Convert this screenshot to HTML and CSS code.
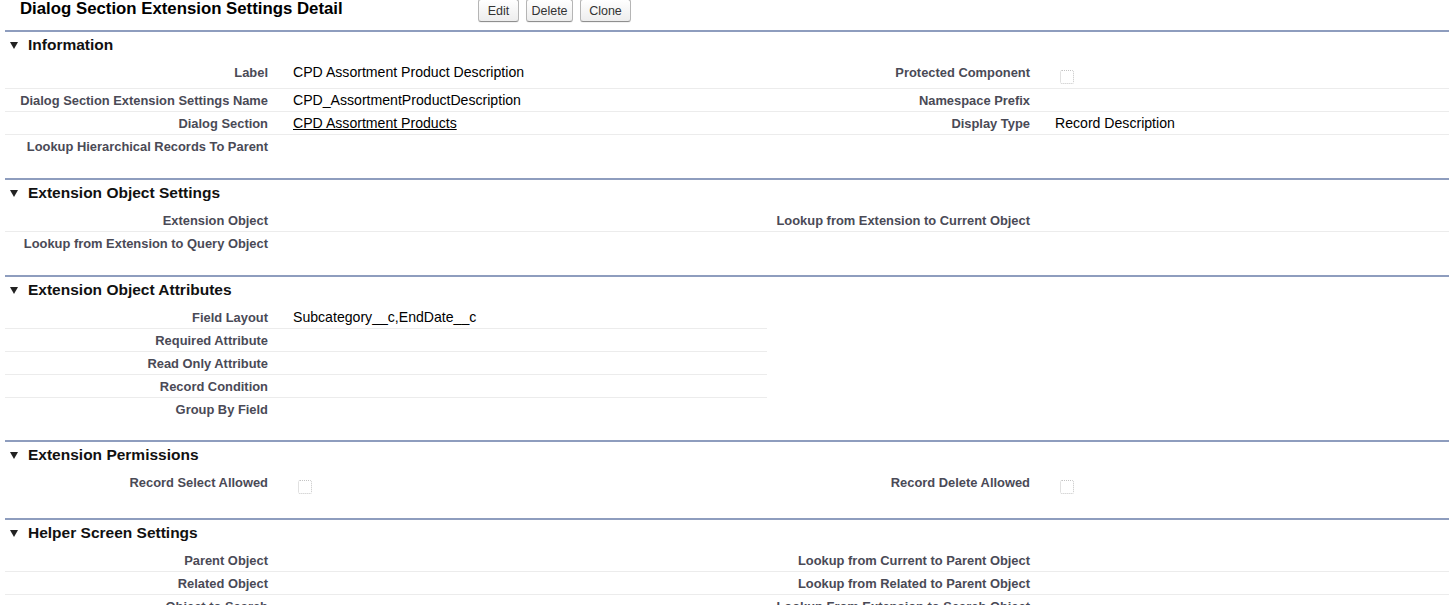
FILE: index.html
```html
<!DOCTYPE html>
<html>
<head>
<meta charset="utf-8">
<link rel="stylesheet" href="styles.css">
</head>
<body>
<div class="page">
  <div class="header">
    <h2 class="title">Dialog Section Extension Settings Detail</h2>
    <div class="buttons">
      <button class="btn btn-edit">Edit</button>
      <button class="btn btn-delete">Delete</button>
      <button class="btn btn-clone">Clone</button>
    </div>
  </div>

  <section class="section section-wide">
    <h3 class="sec-head"><span class="tri"></span>Information</h3>
    <div class="grid">
      <div class="row">
        <div class="lbl">Label</div><div class="val">CPD Assortment Product Description</div>
        <div class="lbl">Protected Component</div><div class="val"><span class="cb"></span></div>
      </div>
      <div class="row">
        <div class="lbl">Dialog Section Extension Settings Name</div><div class="val">CPD_AssortmentProductDescription</div>
        <div class="lbl">Namespace Prefix</div><div class="val"></div>
      </div>
      <div class="row">
        <div class="lbl">Dialog Section</div><div class="val"><a class="link" href="#">CPD Assortment Products</a></div>
        <div class="lbl">Display Type</div><div class="val">Record Description</div>
      </div>
      <div class="row last">
        <div class="lbl">Lookup Hierarchical Records To Parent</div><div class="val"></div>
        <div class="lbl"></div><div class="val"></div>
      </div>
    </div>
  </section>

  <section class="section section-wide">
    <h3 class="sec-head"><span class="tri"></span>Extension Object Settings</h3>
    <div class="grid">
      <div class="row">
        <div class="lbl">Extension Object</div><div class="val"></div>
        <div class="lbl">Lookup from Extension to Current Object</div><div class="val"></div>
      </div>
      <div class="row last">
        <div class="lbl">Lookup from Extension to Query Object</div><div class="val"></div>
        <div class="lbl"></div><div class="val"></div>
      </div>
    </div>
  </section>

  <section class="section">
    <h3 class="sec-head"><span class="tri"></span>Extension Object Attributes</h3>
    <div class="grid single">
      <div class="row">
        <div class="lbl">Field Layout</div><div class="val">Subcategory__c,EndDate__c</div>
      </div>
      <div class="row">
        <div class="lbl">Required Attribute</div><div class="val"></div>
      </div>
      <div class="row">
        <div class="lbl">Read Only Attribute</div><div class="val"></div>
      </div>
      <div class="row">
        <div class="lbl">Record Condition</div><div class="val"></div>
      </div>
      <div class="row last">
        <div class="lbl">Group By Field</div><div class="val"></div>
      </div>
    </div>
  </section>

  <section class="section">
    <h3 class="sec-head"><span class="tri"></span>Extension Permissions</h3>
    <div class="grid">
      <div class="row last">
        <div class="lbl">Record Select Allowed</div><div class="val"><span class="cb"></span></div>
        <div class="lbl">Record Delete Allowed</div><div class="val"><span class="cb"></span></div>
      </div>
    </div>
  </section>

  <section class="section">
    <h3 class="sec-head"><span class="tri"></span>Helper Screen Settings</h3>
    <div class="grid">
      <div class="row">
        <div class="lbl">Parent Object</div><div class="val"></div>
        <div class="lbl">Lookup from Current to Parent Object</div><div class="val"></div>
      </div>
      <div class="row">
        <div class="lbl">Related Object</div><div class="val"></div>
        <div class="lbl">Lookup from Related to Parent Object</div><div class="val"></div>
      </div>
      <div class="row">
        <div class="lbl">Object to Search</div><div class="val"></div>
        <div class="lbl">Lookup From Extension to Search Object</div><div class="val"></div>
      </div>
      <div class="row last">
        <div class="lbl">Search Field</div><div class="val"></div>
        <div class="lbl"></div><div class="val"></div>
      </div>
    </div>
  </section>
</div>
</body>
</html>
```

FILE: styles.css
```css
html, body {
  margin: 0;
  padding: 0;
  background: #fff;
  overflow: hidden;
}

body {
  font-family: "Liberation Sans", Arial, sans-serif;
  color: #000;
}

.page {
  width: 1524px;
  padding-left: 5px;
}

.header {
  display: flex;
  align-items: flex-start;
  height: 30px;
}

.title {
  margin: 0 0 0 15px;
  width: 458px;
  font-size: 16.8px;
  font-weight: bold;
  line-height: 17px;
  color: #000;
}

.buttons {
  display: flex;
  gap: 7px;
  margin-top: -1px;
}

.btn {
  font-family: "Liberation Sans", Arial, sans-serif;
  font-size: 12.5px;
  color: #333;
  height: 23px;
  padding: 0;
  text-align: center;
  border: 1px solid #b5b5b5;
  border-bottom-color: #8f8f8f;
  border-radius: 3px;
  background: linear-gradient(#ffffff, #ededed);
  box-shadow: 0 1px 0 rgba(0, 0, 0, 0.05);
}

.btn-edit { width: 41px; }
.btn-delete { width: 47px; }
.btn-clone { width: 51px; }

.section {
  border-top: 2px solid #8e9dbe;
  padding-bottom: 19px;
}

.section-wide {
  padding-bottom: 20px;
}

.sec-head {
  display: flex;
  align-items: center;
  margin: 0;
  height: 29px;
  box-sizing: border-box;
  padding: 4px 0 7px 5px;
  font-size: 15.5px;
  font-weight: bold;
  line-height: 18px;
  color: #111;
}

.tri {
  width: 0;
  height: 0;
  border-left: 4.5px solid transparent;
  border-right: 4.5px solid transparent;
  border-top: 7px solid #222;
  margin-right: 10px;
  margin-top: 1px;
}

.grid {
  display: flex;
  flex-direction: column;
}

.row {
  display: grid;
  grid-template-columns: 274px 488px 274px 488px;
}

.grid.single .row {
  grid-template-columns: 274px 488px;
  width: 762px;
}

.lbl,
.val {
  padding: 3px 0;
  line-height: 17px;
  border-bottom: 1px solid #ececec;
  min-height: 16px;
}

.row.last .lbl,
.row.last .val {
  border-bottom: none;
}

.row:not(.last) .lbl,
.row:not(.last) .val {
  padding-bottom: 2px;
}

.lbl {
  text-align: right;
  padding-right: 11px;
  font-size: 12.9px;
  font-weight: bold;
  color: #4a4a56;
}

.val {
  padding-left: 14px;
  font-size: 14.1px;
  color: #000;
}

.link {
  color: #000;
  text-decoration: underline;
}

.cb {
  display: block;
  width: 14px;
  height: 14px;
  margin: 6px 0 2px 5px;
  box-sizing: border-box;
  border: 1px dotted #c4c4c4;
  border-radius: 2px;
}
```
